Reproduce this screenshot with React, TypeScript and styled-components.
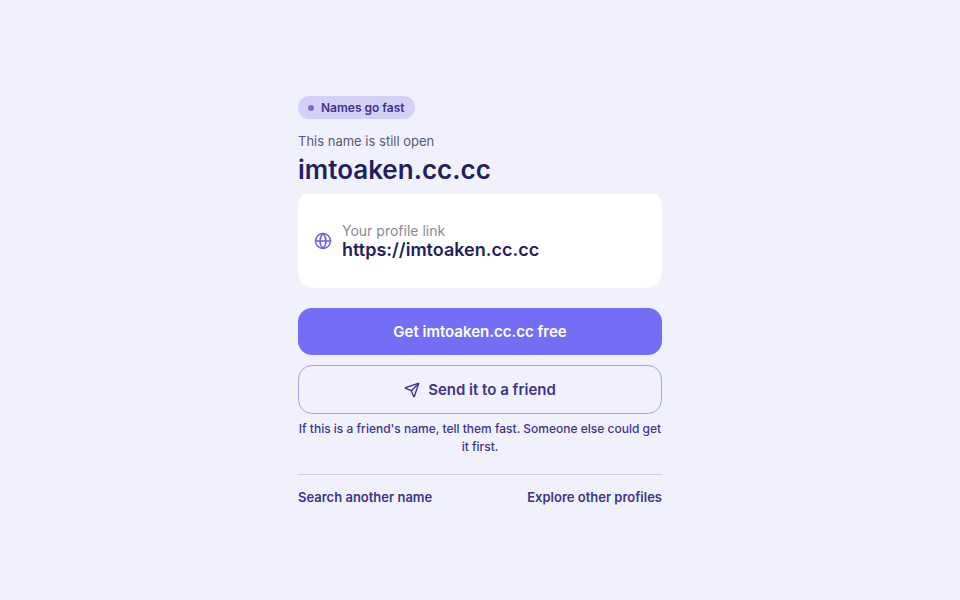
import React from "react";
import styled, { createGlobalStyle } from "styled-components";
import { Globe, Send } from "lucide-react";

const Global = createGlobalStyle`
  html, body { margin: 0; padding: 0; background: #f1f1fe; }
  * { box-sizing: border-box; }
`;

const Page = styled.main`
  width: 960px;
  height: 600px;
  padding-top: 96px;
  display: flex;
  justify-content: center;
  font-family: Inter, sans-serif;
  color: #251e5c;
`;

const Column = styled.div`
  width: 364px;
  display: flex;
  flex-direction: column;
  align-items: stretch;
`;

const Badge = styled.div`
  align-self: flex-start;
  height: 23px;
  display: flex;
  align-items: center;
  gap: 7px;
  padding: 0 10px;
  border-radius: 12px;
  background: #d3d0f8;
  color: #3f3488;
  font-size: 12px;
  font-weight: 600;
`;

const Dot = styled.span`
  width: 6px;
  height: 6px;
  border-radius: 50%;
  background: #7a70c8;
`;

const Lead = styled.p`
  margin: 13px 0 0;
  font-size: 13px;
  line-height: 18px;
  color: #5b5b6b;
`;

const Title = styled.h1`
  position: relative;
  z-index: 1;
  margin: 2px 0 0;
  height: 42px;
  padding-top: 1px;
  font-size: 26px;
  line-height: 34px;
  font-weight: 600;
  color: #251e5c;
  background: #f1f1fe;
`;

const Card = styled.div`
  margin-top: -4px;
  height: 98px;
  display: flex;
  align-items: center;
  gap: 10px;
  padding: 4px 16px 0;
  background: #fff;
  border-radius: 16px;
`;

const LinkText = styled.div`
  display: flex;
  flex-direction: column;
`;

const LinkLabel = styled.span`
  font-size: 14px;
  line-height: 17px;
  color: #8a8a94;
`;

const LinkValue = styled.span`
  font-size: 18px;
  line-height: 22px;
  font-weight: 600;
  color: #251e5c;
`;

const Primary = styled.button`
  margin-top: 20px;
  height: 47px;
  border: 0;
  border-radius: 14px;
  background: #746ef7;
  color: #fff;
  font: 600 15px Inter, sans-serif;
`;

const Secondary = styled.button`
  margin-top: 10px;
  height: 49px;
  display: flex;
  align-items: center;
  justify-content: center;
  gap: 8px;
  border: 1px solid #aaa6d8;
  border-radius: 14px;
  background: transparent;
  color: #3f3488;
  font: 600 15px Inter, sans-serif;
`;

const Note = styled.p`
  margin: 6px 0 0;
  text-align: center;
  font-size: 12px;
  line-height: 18px;
  font-weight: 500;
  color: #3f3488;
`;

const Footer = styled.nav`
  margin-top: 18px;
  padding-top: 13px;
  border-top: 1px solid #cfcfdc;
  display: flex;
  justify-content: space-between;
  font-size: 13px;
  line-height: 18px;
  font-weight: 600;
  color: #3f3488;
`;

export default function App() {
  return (
    <Page>
      <Global />
      <Column>
        <Badge><Dot />Names go fast</Badge>
        <Lead>This name is still open</Lead>
        <Title>imtoaken.cc.cc</Title>
        <Card>
          <Globe size={18} color="#6a62d8" strokeWidth={2} />
          <LinkText>
            <LinkLabel>Your profile link</LinkLabel>
            <LinkValue>https://imtoaken.cc.cc</LinkValue>
          </LinkText>
        </Card>
        <Primary>Get imtoaken.cc.cc free</Primary>
        <Secondary><Send size={16} strokeWidth={2} color="#3a2f80" />Send it to a friend</Secondary>
        <Note>If this is a friend's name, tell them fast. Someone else could get it first.</Note>
        <Footer><span>Search another name</span><span>Explore other profiles</span></Footer>
      </Column>
    </Page>
  );
}
